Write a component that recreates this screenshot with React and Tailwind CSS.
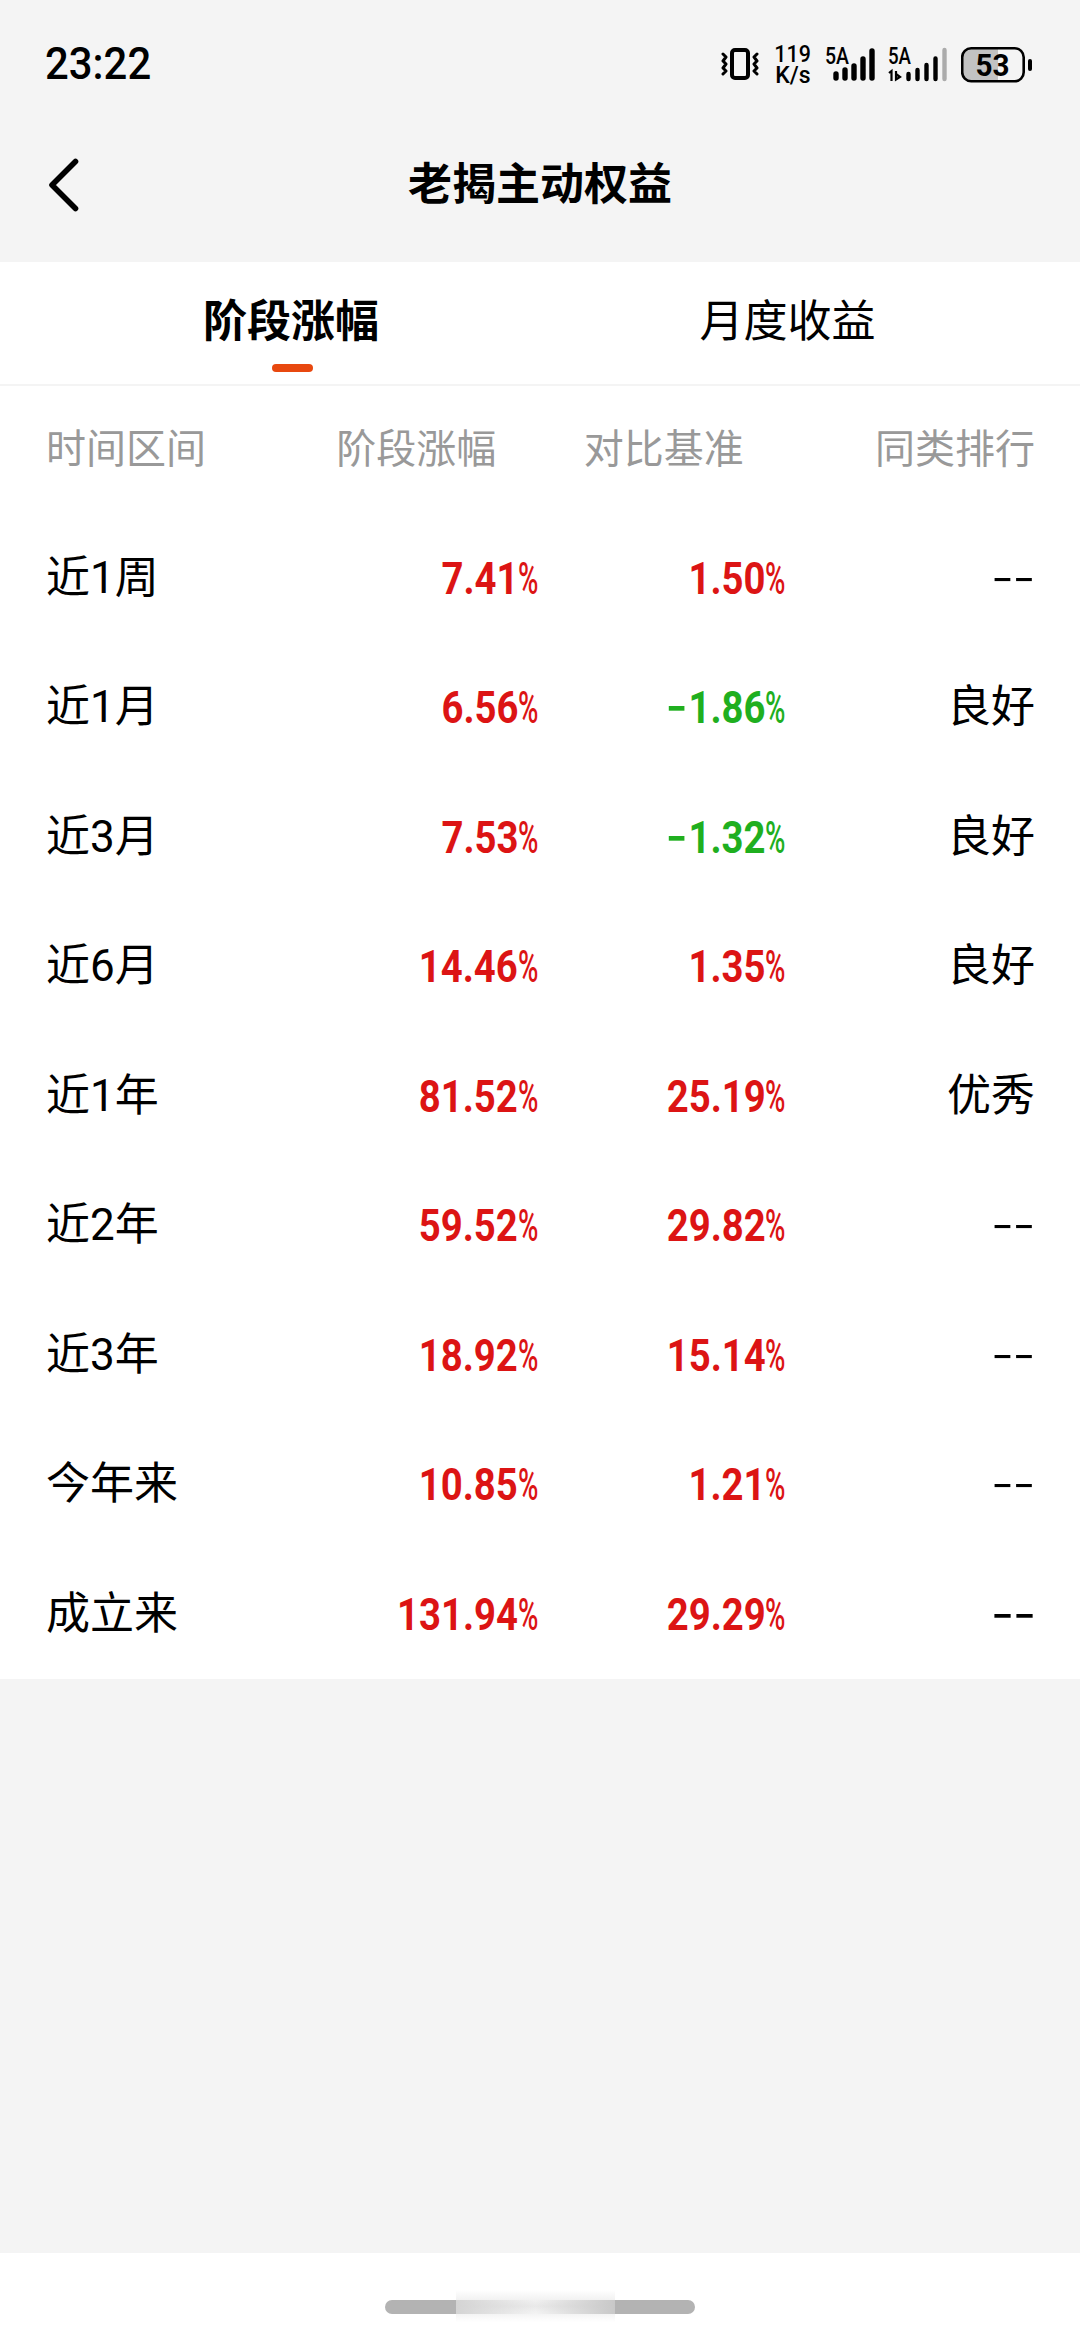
const rows = [
  { label: '近1周', gain: '7.41', base: '1.50', rank: '--' },
  { label: '近1月', gain: '6.56', base: '-1.86', rank: '良好' },
  { label: '近3月', gain: '7.53', base: '-1.32', rank: '良好' },
  { label: '近6月', gain: '14.46', base: '1.35', rank: '良好' },
  { label: '近1年', gain: '81.52', base: '25.19', rank: '优秀' },
  { label: '近2年', gain: '59.52', base: '29.82', rank: '--' },
  { label: '近3年', gain: '18.92', base: '15.14', rank: '--' },
  { label: '今年来', gain: '10.85', base: '1.21', rank: '--' },
  { label: '成立来', gain: '131.94', base: '29.29', rank: '--', strong: true },
];

function Percent({ value }) {
  const negative = value.startsWith('-');
  return (
    <div className={`flex items-center justify-end pr-[2px] pt-[2px] leading-[52px] ${negative ? 'text-[#1faf1f]' : 'text-[#dc1414]'}`}>
      {negative && (
        <span className="-mr-[10px] origin-right -translate-y-[6px] scale-x-[1.3] font-['Noto_Sans_CJK_SC',sans-serif] text-[44px] font-bold">-</span>
      )}
      <span className="origin-right scale-x-[0.87] text-[44px] font-bold">{value.replace('-', '')}</span>
      <span className="flex w-[20px] justify-end">
        <span className="origin-right scale-x-[0.63] text-[44px] font-medium">%</span>
      </span>
    </div>
  );
}

function Rank({ value, strong }) {
  if (value !== '--') return <div className="text-right">{value}</div>;
  return (
    <div className="flex justify-end">
      <span className={`origin-right -translate-y-[5px] scale-x-[1.4] font-['Noto_Sans_CJK_SC',sans-serif] ${strong ? 'font-medium' : ''}`}>--</span>
    </div>
  );
}

function StatusBar() {
  return (
    <div className="flex h-[128px] items-start justify-between pl-[45px] pr-[47px]">
      <div className="origin-left scale-x-[0.93] pt-[38px] text-[45px] font-medium leading-[52px]">23:22</div>
      <div className="flex pt-[44px]">
        <svg width="40" height="40" viewBox="0 0 40 40" fill="none" stroke="black" strokeLinecap="round" strokeLinejoin="round">
          <rect x="11" y="6" width="16" height="28" rx="3" strokeWidth="4" />
          <path d="M2 10l3 3-3 4 3 3-3 4 3 3-3 3M36 10l-3 3 3 4-3 3 3 4-3 3 3 3" strokeWidth="3" />
        </svg>
        <div className="ml-[13px] mr-[1px] flex w-[38px] flex-col items-center text-[23px] font-medium leading-[21px]">
          <span className="scale-x-[0.93] whitespace-nowrap">119</span>
          <span className="whitespace-nowrap">K/s</span>
        </div>
        <svg className="ml-[12px]" width="52" height="40" viewBox="0 0 52 40">
          <text x="0" y="20" fontSize="23" fontWeight="500" textLength="24" lengthAdjust="spacingAndGlyphs">5A</text>
          <g stroke="black" strokeWidth="5.4" strokeLinecap="round">
            <path d="M11 30v4M20 26v8M29 22v12M38 15v19M47 7v27" />
          </g>
        </svg>
        <svg className="ml-[11px]" width="60" height="40" viewBox="0 0 60 40">
          <text x="0" y="20" fontSize="23" fontWeight="500" textLength="23" lengthAdjust="spacingAndGlyphs">5A</text>
          <path d="M1 29l2.500-2v10M8 27v8.500l4-2.500-4-3" fill="none" stroke="black" strokeWidth="2.200" />
          <g strokeWidth="4.400" strokeLinecap="round">
            <path d="M20.500 30v5M29.500 26v9M38.500 21v14M47.500 14.500v20.500" stroke="black" />
            <path d="M56.500 6v29" stroke="#ababab" />
          </g>
        </svg>
        <svg className="ml-[13px]" width="72" height="40" viewBox="0 0 72 40">
          <path d="M10 4.500h27v33h-27q-8 0-8-8v-17q0-8 8-8z" fill="#c2c2c2" />
          <rect x="1.200" y="4.200" width="61.500" height="33" rx="9" fill="none" stroke="black" strokeWidth="2.600" />
          <path d="M69 17v8" stroke="black" strokeWidth="4" strokeLinecap="round" />
          <text x="14.500" y="31.500" fontSize="31" fontWeight="700" textLength="34" lengthAdjust="spacingAndGlyphs">53</text>
        </svg>
      </div>
    </div>
  );
}

export default function App() {
  return (
    <div className="flex h-[2330px] w-[1080px] flex-col bg-[#f4f4f4] font-['Roboto','Noto_Sans_CJK_SC',sans-serif] text-black">
      <StatusBar />
      <header className="grid h-[134px] grid-cols-[200px_1fr_200px] items-center pb-[20px]">
        <svg className="ml-[44px]" width="40" height="56" viewBox="0 0 40 56" fill="none" stroke="black" strokeWidth="5.600" strokeLinecap="round" strokeLinejoin="round">
          <path d="M31.500 4.500L8 28l23.500 23.500" />
        </svg>
        <h1 className="text-center text-[44px] font-bold leading-[60px]">老揭主动权益</h1>
      </header>
      <main className="h-[1417px] bg-white">
        <nav className="grid h-[124px] grid-cols-2 border-b-2 border-[#f4f4f4] px-[45px] text-center text-[44px] leading-[60px]">
          <div className="flex flex-col items-center pt-[30px]">
            <span className="mr-[3px] font-bold">阶段涨幅</span>
            <span className="mt-[12px] h-[8px] w-[41px] rounded-full bg-[#e8480f]" />
          </div>
          <div className="pt-[30px]">月度收益</div>
        </nav>
        <div className="grid h-[127px] grid-cols-4 items-center px-[45px] text-center text-[40px] text-[#999999]">
          <span className="pl-[1px] text-left">时间区间</span>
          <span>阶段涨幅</span>
          <span>对比基准</span>
          <span className="text-right">同类排行</span>
        </div>
        {rows.map((row) => (
          <div key={row.label} className="grid h-[129.5px] grid-cols-4 items-center px-[45px] text-[44px] leading-[60px]">
            <div className="pl-[1px]">{row.label}</div>
            <Percent value={row.gain} />
            <Percent value={row.base} />
            <Rank value={row.rank} strong={row.strong} />
          </div>
        ))}
      </main>
      <footer className="mt-auto flex h-[77px] items-start justify-center bg-white pt-[47px]">
        <div className="relative h-[14px] w-[310px] rounded-full bg-[#b3b3b3]">
          <div className="absolute -top-[10px] left-[71px] h-[32px] w-[159px] bg-linear-to-b from-white via-[#e9e9e9] to-white" />
          <div className="absolute top-0 left-[71px] h-[14px] w-[159px] bg-linear-to-r from-[#d4d4d4] via-transparent to-[#c8c8c8]" />
        </div>
      </footer>
    </div>
  );
}
